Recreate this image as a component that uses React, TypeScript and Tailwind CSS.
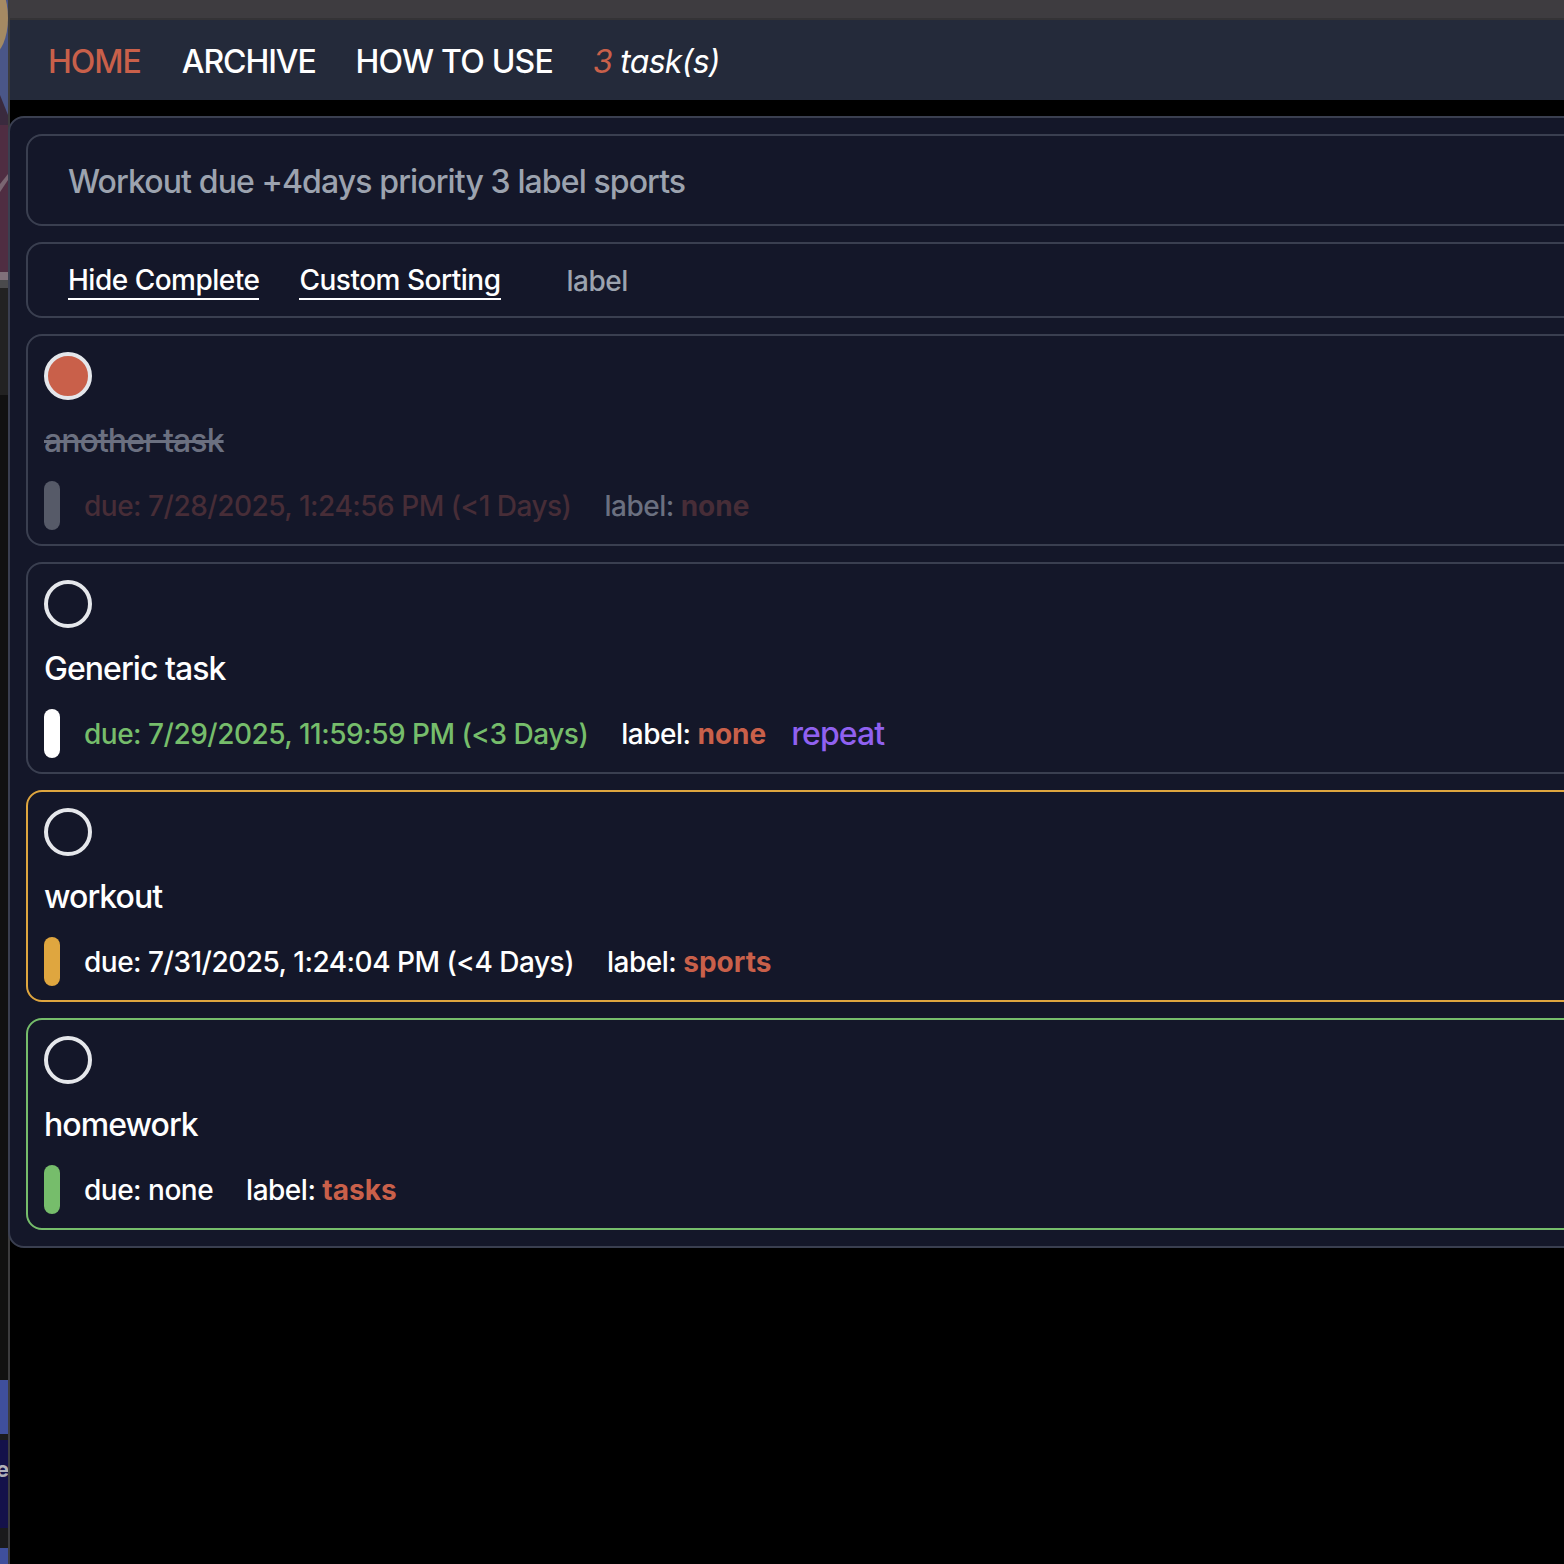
// App.tsx
interface Task {
  title: string;
  due: string;
  label: string;
  done?: boolean;
  repeat?: boolean;
  border: string;
  bar: string;
  dueColor: string;
}

const tasks: Task[] = [
  {
    title: 'another task',
    due: 'due: 7/28/2025, 1:24:56 PM (<1 Days)',
    label: 'none',
    done: true,
    border: 'border-[#3a3f50]',
    bar: 'bg-[#565a68]',
    dueColor: 'text-[#472d37]',
  },
  {
    title: 'Generic task',
    due: 'due: 7/29/2025, 11:59:59 PM (<3 Days)',
    label: 'none',
    repeat: true,
    border: 'border-[#3a3f50]',
    bar: 'bg-white',
    dueColor: 'text-[#76bd6b]',
  },
  {
    title: 'workout',
    due: 'due: 7/31/2025, 1:24:04 PM (<4 Days)',
    label: 'sports',
    border: 'border-[#dfa63f]',
    bar: 'bg-[#dfa63f]',
    dueColor: 'text-white',
  },
  {
    title: 'homework',
    due: 'due: none',
    label: 'tasks',
    border: 'border-[#76bd6b]',
    bar: 'bg-[#76bd6b]',
    dueColor: 'text-white',
  },
];

function TaskCard({ task }: { task: Task }) {
  return (
    <div className={`h-[212px] rounded-[16px] border-2 ${task.border} pl-[16px] pt-[16px]`}>
      <div
        className={`h-[48px] w-[48px] rounded-full border-[4px] border-[#e5e7eb] ${task.done ? 'bg-[#c9604a]' : ''}`}
      />
      <div
        className={`mt-[16px] h-[48px] text-[32px] leading-[50px] tracking-[-0.95px] ${task.done ? 'text-[#6b7080] line-through' : 'text-white'}`}
      >
        {task.title}
      </div>
      <div className="mt-[17px] flex h-[49px] items-center">
        <div className={`h-[49px] w-[16px] rounded-full ${task.bar}`} />
        <div className="flex items-center pt-[1px] tracking-[-0.5px]">
          <span className={`ml-[24px] text-[28px] ${task.dueColor}`}>{task.due}</span>
          <span className={`ml-[33px] text-[28px] ${task.done ? 'text-[#6b7080]' : 'text-white'}`}>
            label:{' '}
            <b className={`font-bold tracking-[0px] ${task.done ? 'text-[#472d37]' : 'text-[#c9604a]'}`}>
              {task.label}
            </b>
          </span>
          {task.repeat && (
            <span className="ml-[25px] text-[32px] tracking-[-0.9px] text-[#9061f0]">repeat</span>
          )}
        </div>
      </div>
    </div>
  );
}

// the desktop wallpaper peeking out left of the window
function WallpaperStrip() {
  return (
    <div className="flex h-full w-[8px] shrink-0 flex-col overflow-hidden">
      <svg width="8" height="280" viewBox="0 0 8 280" className="block shrink-0">
        <rect width="8" height="280" fill="#4f2d42" />
        <rect width="8" height="115" fill="#4a5688" />
        <ellipse cx="-8" cy="18" rx="16" ry="36" fill="#a58a63" />
        <polygon points="0,95 8,115 8,125 0,125" fill="#3a2a3e" />
        <polygon points="0,184 8,174 8,180 0,192" fill="#7a6672" />
        <rect y="272" width="8" height="8" fill="#80707a" />
      </svg>
      <div className="h-[8px] shrink-0 bg-[#4a4a4c]" />
      <div className="h-[107px] shrink-0 bg-[#222222]" />
      <div className="h-[985px] shrink-0 bg-[#111111]" />
      <div className="h-[54px] shrink-0 bg-[#3f4f9c]" />
      <div className="h-[6px] shrink-0 bg-[#1a1a1c]" />
      <div className="h-[88px] shrink-0 overflow-hidden bg-[#14114a]">
        <div className="ml-[-4px] mt-[17px] text-[22px] leading-[24px] font-bold text-[#b0b0b8]">e</div>
      </div>
      <div className="h-[20px] shrink-0 bg-[#1a1a1c]" />
      <div className="h-[16px] shrink-0 bg-[#3f4f9c]" />
    </div>
  );
}

export default function App() {
  return (
    <div className="flex h-[1564px] w-[1564px] overflow-hidden bg-black font-['Inter',sans-serif] font-[450]">
      <WallpaperStrip />
      <div className="w-[2px] shrink-0 bg-[#3c3c3e]" />
      <div className="flex w-[1800px] shrink-0 flex-col">
        <div className="h-[18px] bg-[#3e3c40]" />
        <div className="h-[2px] bg-[#343336]" />
        <nav className="flex h-[80px] items-center bg-[#242a3a] pl-[38px] pt-[4px] text-[32px] tracking-[-1px]">
          <span className="text-[#c9604a]">HOME</span>
          <span className="ml-[41px] tracking-[-1.1px] text-white">ARCHIVE</span>
          <span className="ml-[40px] tracking-[-0.8px] text-white">HOW TO USE</span>
          <span className="ml-[40px] italic tracking-[-0.72px] text-white">
            <span className="text-[#c9604a]">3</span> task(s)
          </span>
        </nav>
        <main className="ml-[-2px] mt-[16px] flex h-[1132px] flex-col gap-[16px] rounded-[16px] border-2 border-[#3a3f50] bg-[#141729] pl-[16px] pt-[16px]">
          <div className="flex h-[92px] items-center rounded-[16px] border-2 border-[#3a3f50] pl-[40px] pt-[4px] text-[32px] tracking-[-0.89px] text-[#9ca3af]">
            Workout due +4days priority 3 label sports
          </div>
          <div className="flex h-[76px] items-center rounded-[16px] border-2 border-[#3a3f50] pl-[40px] pt-[2px] text-[28px] tracking-[-0.5px]">
            <span className="border-b-2 border-white leading-[36px] text-white">Hide Complete</span>
            <span className="ml-[40px] border-b-2 border-white leading-[36px] text-white">Custom Sorting</span>
            <span className="ml-[66px] text-[#9ca3af]">label</span>
          </div>
          {tasks.map((task) => (
            <TaskCard key={task.title} task={task} />
          ))}
        </main>
      </div>
    </div>
  );
}
